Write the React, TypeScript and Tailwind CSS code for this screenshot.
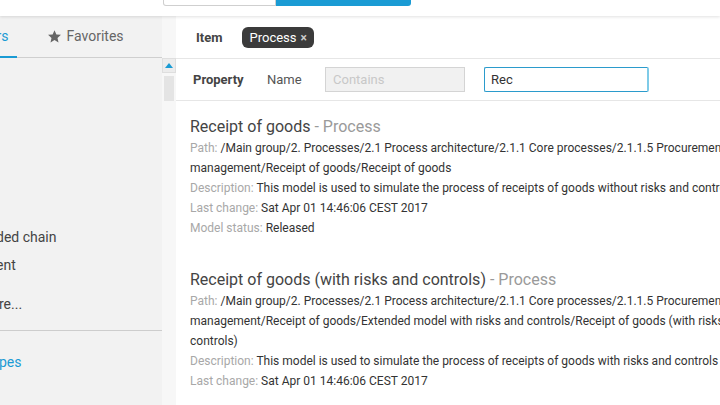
import React from "react";

const Label = ({ children }: { children: React.ReactNode }) => (
  <span className="text-[#a8a8a8]">{children}</span>
);

function Result({
  title,
  path,
  desc,
  status,
}: {
  title: string;
  path: string;
  desc: string;
  status?: string;
}) {
  return (
    <div className="mb-[31px]">
      <div className="text-[16px] leading-[22px] text-[#444]">
        {title} <span className="text-[#9a9a9a]">- Process</span>
      </div>
      <div className="text-[12px] leading-[20px] text-[#333]">
        <div>
          <Label>Path:</Label> {path}
        </div>
        <div>
          <Label>Description:</Label> {desc}
        </div>
        <div>
          <Label>Last change:</Label> Sat Apr 01 14:46:06 CEST 2017
        </div>
        {status && (
          <div>
            <Label>Model status:</Label> {status}
          </div>
        )}
      </div>
    </div>
  );
}

export default function App() {
  return (
    <div
      className="relative w-[720px] h-[405px] overflow-hidden bg-white flex flex-col"
      style={{ fontFamily: "Roboto, 'Liberation Sans', sans-serif" }}
    >
      {/* top bar */}
      <div className="relative z-10 h-[16px] shrink-0 bg-white shadow-[0_1px_3px_rgba(0,0,0,0.12)] flex pl-[163px]">
        <div className="w-[113px] h-[6px] border border-t-0 border-[#cfcfcf] rounded-bl-[3px] bg-white" />
        <div className="w-[135px] h-[6px] bg-[#1a9bd4] rounded-br-[3px]" />
      </div>

      <div className="flex flex-1 min-h-0">
        {/* sidebar */}
        <div className="w-[162px] bg-[#f2f2f2] flex flex-col text-[14px] text-[#444] overflow-hidden">
          <div className="h-[42px] shrink-0 flex items-stretch border-b border-[#cfcfcf]">
            <div className="relative flex items-center pr-[8px] ml-[-30px]">
              <span className="text-[#1a9bd4] text-[14px]">Filters</span>
              <div className="absolute left-0 right-0 bottom-[-1px] h-[2px] bg-[#1a9bd4]" />
            </div>
            <div className="flex items-center ml-[30px] gap-[5px] text-[#666]">
              <svg width="15" height="15" viewBox="0 0 24 24" fill="#666">
                <path d="M12 1.8l3 6.8 7.3.7-5.5 4.9 1.6 7.2L12 17.6l-6.4 3.8 1.6-7.2L1.7 9.3 9 8.6z" />
              </svg>
              <span>Favorites</span>
            </div>
          </div>
          <div className="flex flex-col pt-[165px]">
            <div className="h-[28px] leading-[28px] ml-[-4px]">ded chain</div>
            <div className="h-[28px] leading-[28px] ml-[-4px]">ent</div>
            <div className="h-[28px] leading-[28px] mt-[11px] ml-[-1px]">re...</div>
            <div className="mt-[12px] border-t border-[#cdcdcd]" />
            <div className="mt-[21px] text-[#1a9bd4] ml-[-1px]">pes</div>
          </div>
        </div>

        {/* scrollbar */}
        <div className="w-[14px] bg-[#f7f7f7] flex flex-col pt-[42px]">
          <div className="h-[15px] bg-[#ececec] border border-[#dedede] flex items-center justify-center">
            <svg width="8" height="5" viewBox="0 0 8 5">
              <path d="M0 5L4 0L8 5Z" fill="#1a9bd4" />
            </svg>
          </div>
          <div className="mt-[3px] mx-[2px] h-[25px] bg-[#e4e4e4]" />
        </div>

        {/* main */}
        <div className="flex-1 min-w-0 flex flex-col text-[13px] text-[#444]">
          <div className="h-[43px] shrink-0 flex items-center border-b border-[#e6e6e6] pl-[20px] pt-[1px]">
            <span className="font-bold text-[#444]">Item</span>
            <div className="ml-[20px] h-[21px] px-[7px] rounded-[6px] bg-[#3b3b3b] flex items-center gap-[4px] text-white text-[13px]">
              <span>Process</span>
              <span className="text-[12px] text-[#ccc] font-bold">×</span>
            </div>
          </div>
          <div className="h-[42px] shrink-0 flex items-center border-b border-[#e6e6e6] pl-[17px]">
            <span className="font-bold text-[#444] w-[74px]">Property</span>
            <span className="text-[#555] w-[58px]">Name</span>
            <div className="w-[140px] h-[25px] bg-[#f1f1f1] border border-[#d4d4d4] flex items-center px-[7px] text-[#c8c8c8]">
              Contains
            </div>
            <div className="ml-[19px] w-[165px] h-[25px] border border-[#2b9bcc] border-r-2 border-r-[#7fcbe8] rounded-[2px] flex items-center px-[6px] text-[#333]">
              Rec
            </div>
          </div>
          <div className="overflow-hidden pl-[14px] pt-[15px]">
            <div className="w-[580px]">
              <Result
                title="Receipt of goods"
                path="/Main group/2. Processes/2.1 Process architecture/2.1.1 Core processes/2.1.1.5 Procurement management/Receipt of goods/Receipt of goods"
                desc="This model is used to simulate the process of receipts of goods without risks and controls"
                status="Released"
              />
              <Result
                title="Receipt of goods (with risks and controls)"
                path="/Main group/2. Processes/2.1 Process architecture/2.1.1 Core processes/2.1.1.5 Procurement management/Receipt of goods/Extended model with risks and controls/Receipt of goods (with risks and controls)"
                desc="This model is used to simulate the process of receipts of goods with risks and controls"
              />
            </div>
          </div>
        </div>
      </div>
    </div>
  );
}
